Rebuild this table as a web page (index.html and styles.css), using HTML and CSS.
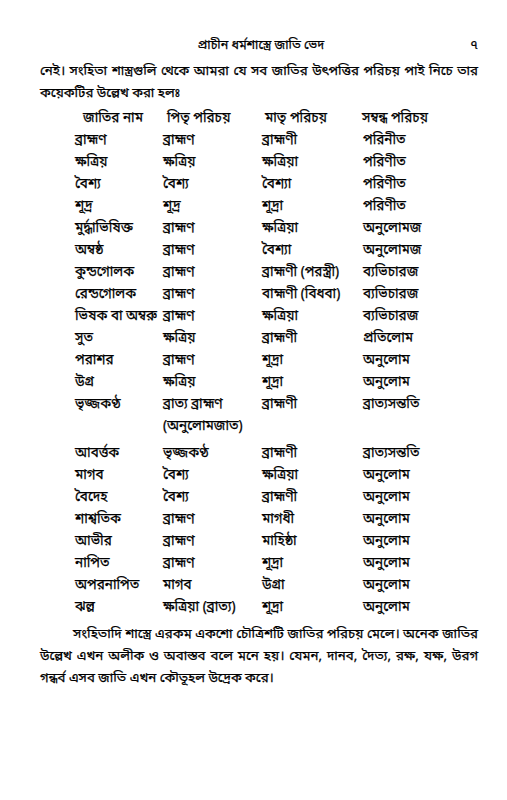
FILE: index.html
```html
<!DOCTYPE html>
<html lang="bn">
<head>
<meta charset="utf-8">
<link rel="stylesheet" href="styles.css">
</head>
<body>
<div class="page">
  <header class="running-head">
    <span class="title">প্রাচীন ধর্মশাস্ত্রে জাতি ভেদ</span>
    <span class="folio">৭</span>
  </header>
  <p class="para">
    <span class="line full">নেই। সংহিতা শাস্ত্রগুলি থেকে আমরা যে সব জাতির উৎপত্তির পরিচয় পাই নিচে তার</span>
    <span class="line">কয়েকটির উল্লেখ করা হলঃ</span>
  </p>
  <div class="table">
    <div class="row head"><span>জাতির নাম</span><span>পিতৃ পরিচয়</span><span>মাতৃ পরিচয়</span><span>সম্বন্ধ পরিচয়</span></div>
    <div class="row"><span>ব্রাহ্মণ</span><span>ব্রাহ্মণ</span><span>ব্রাহ্মণী</span><span>পরিনীত</span></div>
    <div class="row"><span>ক্ষত্রিয়</span><span>ক্ষত্রিয়</span><span>ক্ষত্রিয়া</span><span>পরিণীত</span></div>
    <div class="row"><span>বৈশ্য</span><span>বৈশ্য</span><span>বৈশ্যা</span><span>পরিণীত</span></div>
    <div class="row"><span>শূদ্র</span><span>শূদ্র</span><span>শূদ্রা</span><span>পরিণীত</span></div>
    <div class="row"><span>মুর্দ্ধাভিষিক্ত</span><span>ব্রাহ্মণ</span><span>ক্ষত্রিয়া</span><span>অনুলোমজ</span></div>
    <div class="row"><span>অম্বষ্ঠ</span><span>ব্রাহ্মণ</span><span>বৈশ্যা</span><span>অনুলোমজ</span></div>
    <div class="row"><span>কুন্ডগোলক</span><span>ব্রাহ্মণ</span><span>ব্রাহ্মণী (পরস্ত্রী)</span><span>ব্যভিচারজ</span></div>
    <div class="row"><span>রেন্ডগোলক</span><span>ব্রাহ্মণ</span><span>বাহ্মণী (বিধবা)</span><span>ব্যভিচারজ</span></div>
    <div class="row"><span>ভিষক বা অম্বরু</span><span>ব্রাহ্মণ</span><span>ক্ষত্রিয়া</span><span>ব্যভিচারজ</span></div>
    <div class="row"><span>সুত</span><span>ক্ষত্রিয়</span><span>ব্রাহ্মণী</span><span>প্রতিলোম</span></div>
    <div class="row"><span>পরাশর</span><span>ব্রাহ্মণ</span><span>শূদ্রা</span><span>অনুলোম</span></div>
    <div class="row"><span>উগ্র</span><span>ক্ষত্রিয়</span><span>শূদ্রা</span><span>অনুলোম</span></div>
    <div class="row tall"><span>ভৃজ্জকণ্ঠ</span><span>ব্রাত্য ব্রাহ্মণ<br>(অনুলোমজাত)</span><span>ব্রাহ্মণী</span><span>ব্রাত্যসন্ততি</span></div>
    <div class="row"><span>আবর্ত্তক</span><span>ভৃজ্জকণ্ঠ</span><span>ব্রাহ্মণী</span><span>ব্রাত্যসন্ততি</span></div>
    <div class="row"><span>মাগব</span><span>বৈশ্য</span><span>ক্ষত্রিয়া</span><span>অনুলোম</span></div>
    <div class="row"><span>বৈদেহ</span><span>বৈশ্য</span><span>ব্রাহ্মণী</span><span>অনুলোম</span></div>
    <div class="row"><span>শাশ্বতিক</span><span>ব্রাহ্মণ</span><span>মাগধী</span><span>অনুলোম</span></div>
    <div class="row"><span>আভীর</span><span>ব্রাহ্মণ</span><span>মাহিষ্ঠা</span><span>অনুলোম</span></div>
    <div class="row"><span>নাপিত</span><span>ব্রাহ্মণ</span><span>শূদ্রা</span><span>অনুলোম</span></div>
    <div class="row"><span>অপরনাপিত</span><span>মাগব</span><span>উগ্রা</span><span>অনুলোম</span></div>
    <div class="row"><span>ঝল্ল</span><span>ক্ষত্রিয়া (ব্রাত্য)</span><span>শূদ্রা</span><span>অনুলোম</span></div>
  </div>
  <p class="para">
    <span class="line full indent">সংহিতাদি শাস্ত্রে এরকম একশো চৌত্রিশটি জাতির পরিচয় মেলে। অনেক জাতির</span>
    <span class="line full">উল্লেখ এখন অলীক ও অবাস্তব বলে মনে হয়। যেমন, দানব, দৈত্য, রক্ষ, যক্ষ, উরগ</span>
    <span class="line">গন্ধর্ব এসব জাতি এখন কৌতূহল উদ্রেক করে।</span>
  </p>
</div>
</body>
</html>
```

FILE: styles.css
```css
html, body {
  margin: 0;
  padding: 0;
  background: #ffffff;
}
body {
  font-family: "Noto Sans Bengali", "Lohit Bengali", "Noto Sans", "Liberation Sans", sans-serif;
  color: #000000;
  font-size: 13.3px;
  -webkit-text-stroke: 0.25px #000000;
}
.page {
  width: 438px;
  padding: 35px 29px 0 40px;
}
.running-head {
  display: flex;
  justify-content: center;
  position: relative;
  height: 22px;
  line-height: 22px;
  font-size: 12.5px;
}
.running-head .title {
  padding-left: 4px;
}
.folio {
  position: absolute;
  right: 0;
  top: 0;
  font-size: 13px;
}
.para {
  margin: 4px 0 0 0;
  line-height: 22px;
}
.line {
  display: block;
  white-space: nowrap;
  text-align: left;
}
.line.full {
  text-align: justify;
  text-align-last: justify;
}
.line.indent {
  padding-left: 33px;
}
.table {
  margin: 3px 0 5px 35px;
  font-size: 13.5px;
}
.row {
  display: grid;
  grid-template-columns: 88px 99px 101px 1fr;
  line-height: 22px;
  white-space: nowrap;
}
.row.head {
  padding-left: 8px;
  grid-template-columns: 84px 98px 97px 1fr;
}
.row.tall {
  margin-bottom: 5px;
}
```
